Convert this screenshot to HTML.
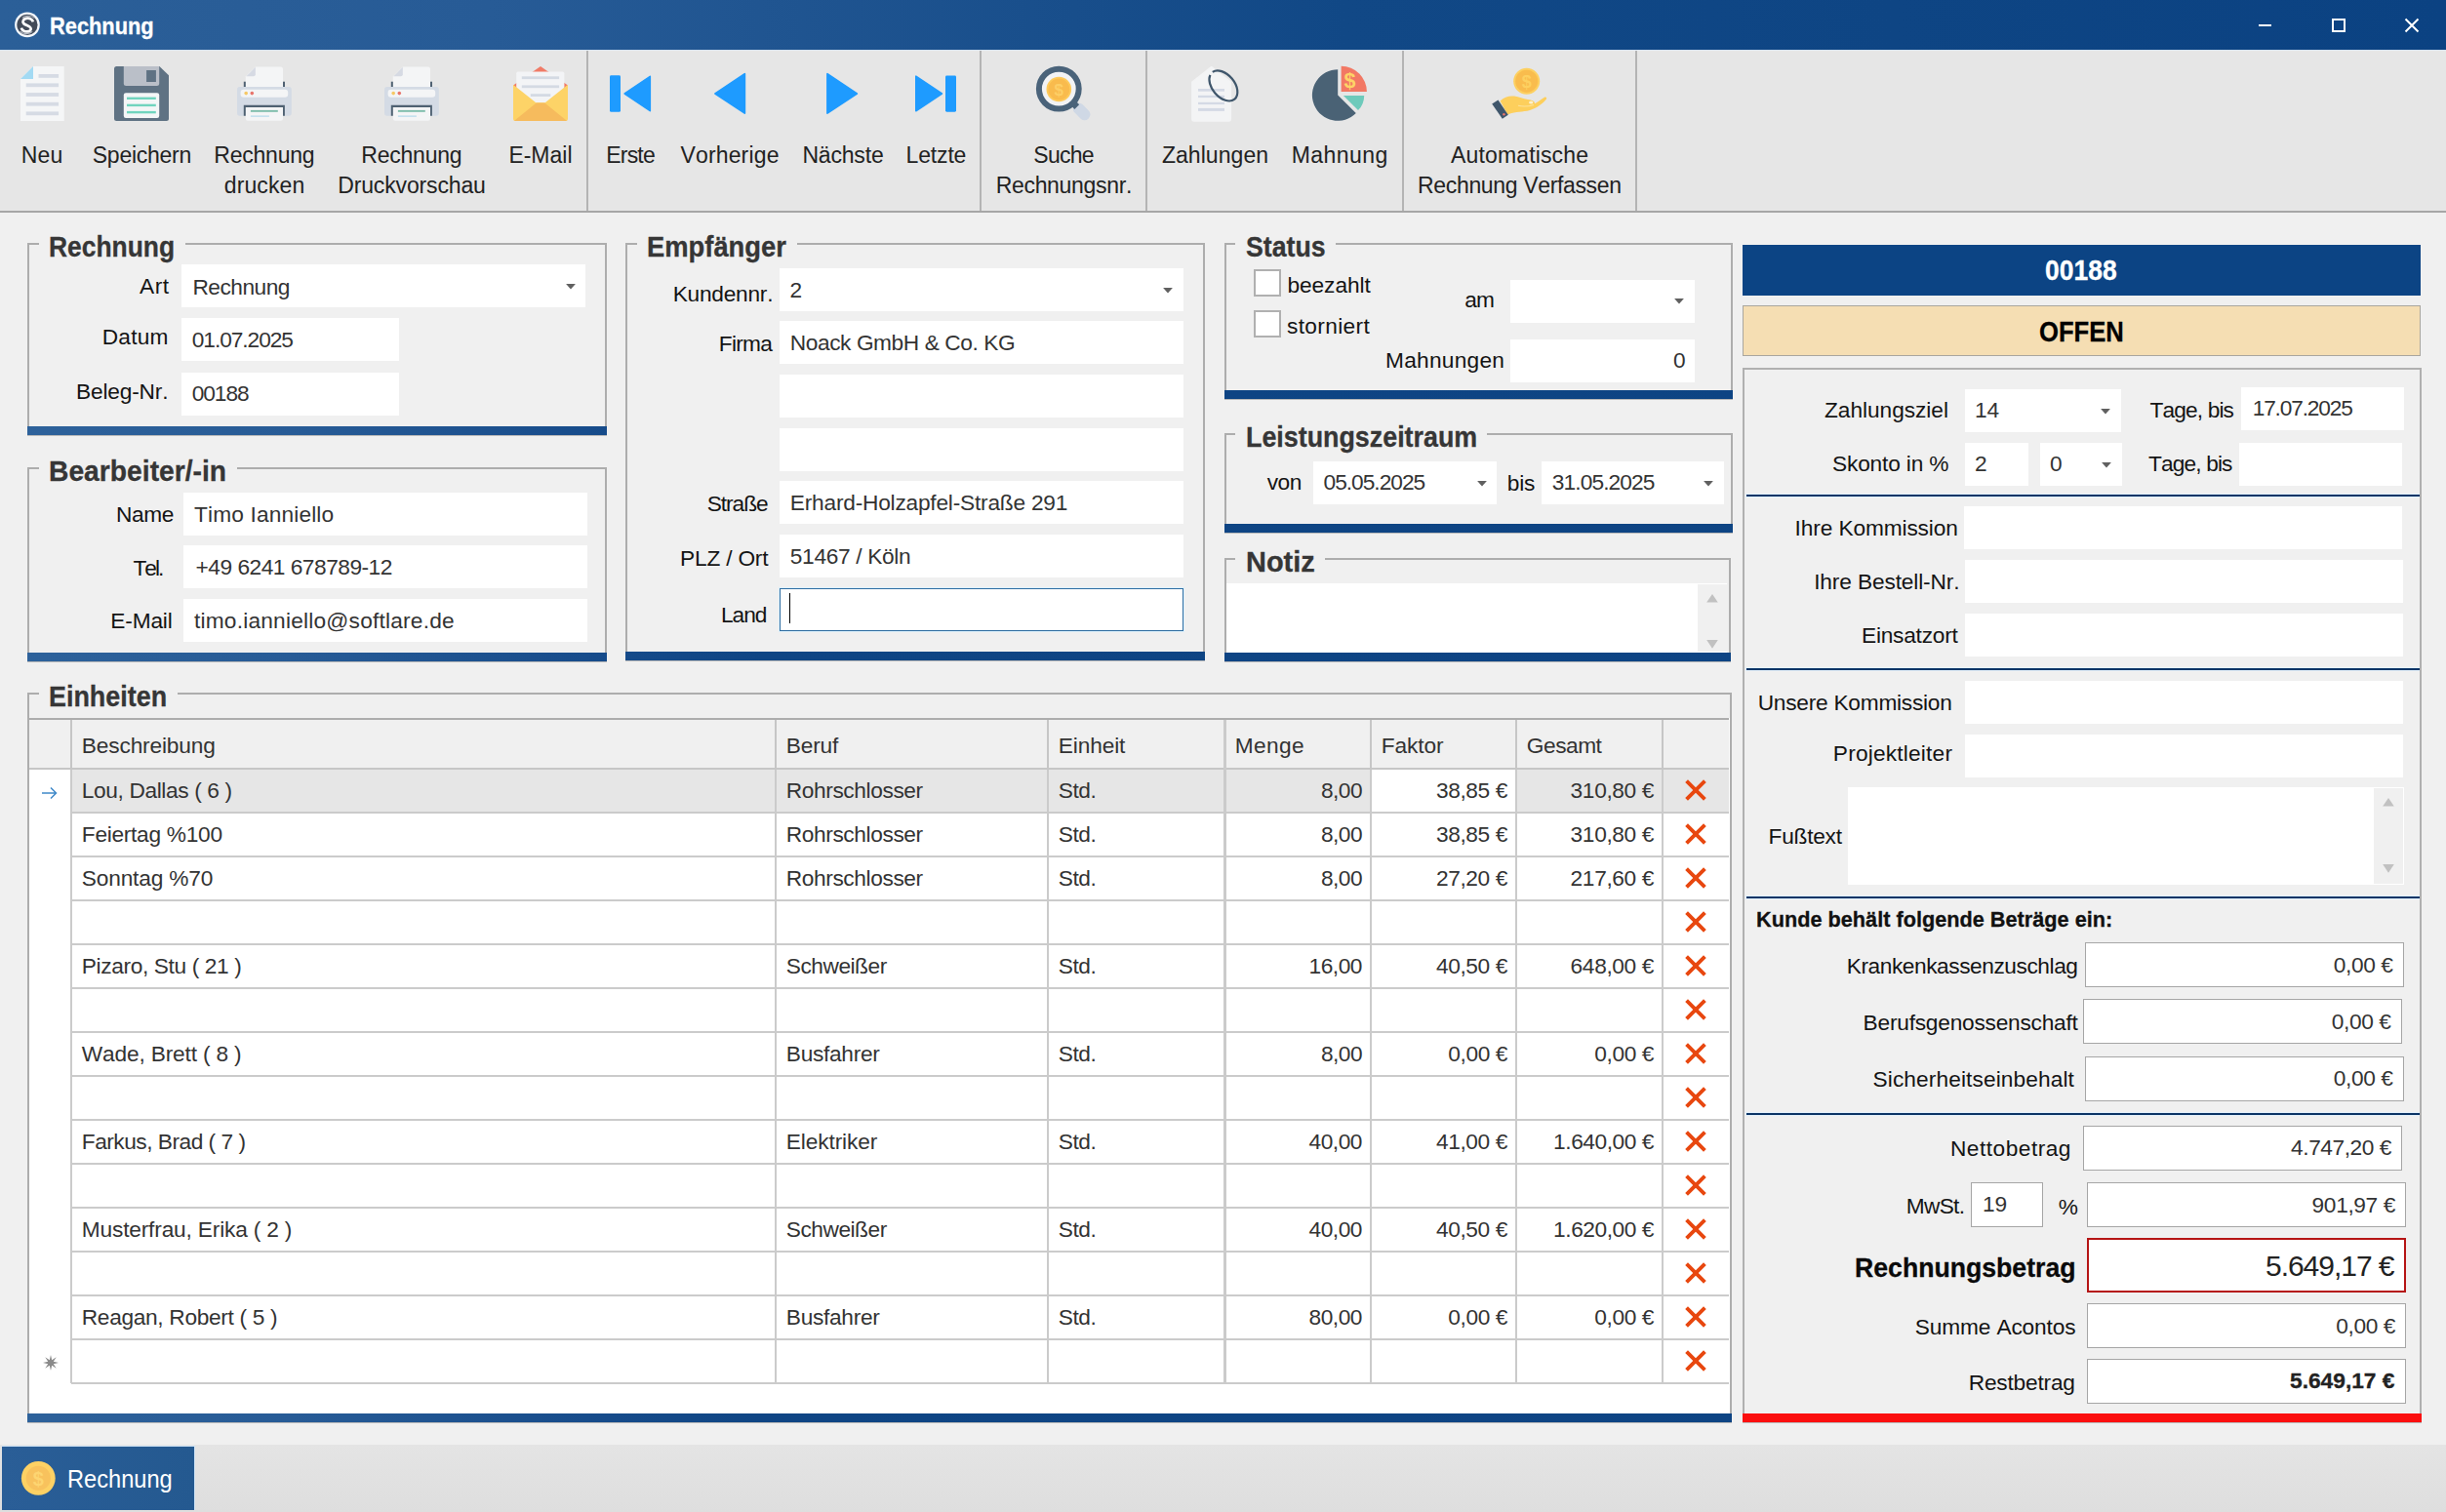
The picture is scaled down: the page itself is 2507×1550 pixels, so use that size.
<!DOCTYPE html>
<html><head><meta charset="utf-8"><title>Rechnung</title>
<style>
html,body{margin:0;padding:0;}
body{width:2507px;height:1550px;overflow:hidden;background:#f0f0f0;position:relative;font-family:"Liberation Sans",sans-serif;color:#141414;}
.a{position:absolute;box-sizing:border-box;}
.t{position:absolute;white-space:nowrap;line-height:1;font-kerning:none;display:block;}
</style></head><body>
<div class="a " style="left:0px;top:0px;width:2507px;height:51px;background:linear-gradient(90deg,#2b5f98 0%,#275b96 20%,#114886 55%,#0b4282 100%);"></div>
<div class="a " style="left:0px;top:51px;width:2507px;height:1px;background:#dbe6f1;"></div>
<span class="t" style="top:14.5px;font-size:24.4px;font-weight:bold;-webkit-text-stroke:0.3px;color:#fff;left:50.9px;transform:scaleX(0.8945);transform-origin:0 0;">Rechnung</span>
<div class="a " style="left:2315px;top:25px;width:13px;height:2px;background:#fff;"></div>
<div class="a " style="left:2390px;top:19px;width:14px;height:14px;border:2px solid #fff;"></div>
<svg class="a" style="left:2464px;top:18px" width="16" height="16" viewBox="0 0 16 16"><path d="M1.5 1.5 L14.5 14.5 M14.5 1.5 L1.5 14.5" stroke="#fff" stroke-width="2" fill="none"/></svg>
<div class="a " style="left:0px;top:52px;width:2507px;height:164px;background:#e6e6e6;"></div>
<div class="a " style="left:0px;top:216px;width:2507px;height:2px;background:#a6a6a6;"></div>
<div class="a " style="left:601px;top:52px;width:2px;height:164px;background:#b4b4b4;"></div>
<div class="a " style="left:1004px;top:52px;width:2px;height:164px;background:#b4b4b4;"></div>
<div class="a " style="left:1174px;top:52px;width:2px;height:164px;background:#b4b4b4;"></div>
<div class="a " style="left:1437px;top:52px;width:2px;height:164px;background:#b4b4b4;"></div>
<div class="a " style="left:1676px;top:52px;width:2px;height:164px;background:#b4b4b4;"></div>
<span class="t" style="top:148.0px;font-size:23px;color:#222;left:21.7px;letter-spacing:0.18px;">Neu</span>
<span class="t" style="top:148.0px;font-size:23px;color:#222;left:94.8px;letter-spacing:-0.27px;">Speichern</span>
<span class="t" style="top:148.0px;font-size:23px;color:#222;left:219.3px;letter-spacing:-0.22px;">Rechnung</span>
<span class="t" style="top:179.1px;font-size:23px;color:#222;left:229.8px;letter-spacing:0.11px;">drucken</span>
<span class="t" style="top:148.0px;font-size:23px;color:#222;left:370.3px;letter-spacing:-0.22px;">Rechnung</span>
<span class="t" style="top:179.1px;font-size:23px;color:#222;left:346.2px;letter-spacing:-0.14px;">Druckvorschau</span>
<span class="t" style="top:148.0px;font-size:23px;color:#222;left:521.4px;letter-spacing:-0.01px;">E-Mail</span>
<span class="t" style="top:148.0px;font-size:23px;color:#222;left:621.2px;letter-spacing:-0.78px;">Erste</span>
<span class="t" style="top:148.0px;font-size:23px;color:#222;left:697.5px;letter-spacing:0.15px;">Vorherige</span>
<span class="t" style="top:148.0px;font-size:23px;color:#222;left:822.4px;letter-spacing:-0.18px;">Nächste</span>
<span class="t" style="top:148.0px;font-size:23px;color:#222;left:928.6px;letter-spacing:-0.17px;">Letzte</span>
<span class="t" style="top:148.0px;font-size:23px;color:#222;left:1059.3px;letter-spacing:-0.73px;">Suche</span>
<span class="t" style="top:179.1px;font-size:23px;color:#222;left:1020.7px;letter-spacing:-0.32px;">Rechnungsnr.</span>
<span class="t" style="top:148.0px;font-size:23px;color:#222;left:1190.9px;letter-spacing:0.06px;">Zahlungen</span>
<span class="t" style="top:148.0px;font-size:23px;color:#222;left:1323.7px;letter-spacing:0.45px;">Mahnung</span>
<span class="t" style="top:148.0px;font-size:23px;color:#222;left:1487.1px;letter-spacing:0.14px;">Automatische</span>
<span class="t" style="top:179.1px;font-size:23px;color:#222;left:1453.1px;letter-spacing:-0.35px;">Rechnung Verfassen</span>
<div class="a " style="left:28px;top:249px;width:594px;height:198px;border:2px solid #adadad;border-bottom:none;"></div>
<div class="a " style="left:28px;top:446px;width:594px;height:1px;background:#b9b9b9;"></div>
<div class="a " style="left:28px;top:437px;width:594px;height:9px;background:linear-gradient(90deg,#2e629b 0px,#275b96 300px,#174c8b 600px,#0f4584 780px,#0c4383 2507px);background-size:2507px 100%;background-position:-28px 0;background-repeat:no-repeat;"></div>
<div class="a " style="left:39.9px;top:247px;width:150.1px;height:6px;background:#f0f0f0;"></div>
<span class="t" style="top:238.9px;font-size:29px;font-weight:bold;-webkit-text-stroke:0.3px;color:#363636;left:50.4px;transform:scaleX(0.9106);transform-origin:0 0;">Rechnung</span>
<div class="a " style="left:186px;top:271px;width:414px;height:44px;background:#fff;"></div>
<svg class="a" style="left:578.5px;top:290.8px" width="12" height="7" viewBox="0 0 12 7"><path d="M1.1 0 H10.9 L6 5.4 Z" fill="#606060"/></svg>
<div class="a " style="left:186px;top:326px;width:223px;height:44px;background:#fff;"></div>
<div class="a " style="left:186px;top:382px;width:223px;height:44px;background:#fff;"></div>
<span class="t" style="top:281.8px;font-size:22.7px;left:143.0px;letter-spacing:0.54px;">Art</span>
<span class="t" style="top:334.1px;font-size:22.7px;left:104.8px;letter-spacing:0.19px;">Datum</span>
<span class="t" style="top:389.6px;font-size:22.7px;left:78.0px;letter-spacing:-0.17px;">Beleg-Nr.</span>
<span class="t" style="top:282.7px;font-size:22.7px;color:#333;left:197.5px;letter-spacing:-0.51px;">Rechnung</span>
<span class="t" style="top:336.7px;font-size:22.7px;color:#333;left:196.8px;letter-spacing:-1.05px;">01.07.2025</span>
<span class="t" style="top:392.4px;font-size:22.7px;color:#333;left:196.8px;letter-spacing:-1.08px;">00188</span>
<div class="a " style="left:28px;top:479px;width:594px;height:200px;border:2px solid #adadad;border-bottom:none;"></div>
<div class="a " style="left:28px;top:678px;width:594px;height:1px;background:#b9b9b9;"></div>
<div class="a " style="left:28px;top:669px;width:594px;height:9px;background:linear-gradient(90deg,#2e629b 0px,#275b96 300px,#174c8b 600px,#0f4584 780px,#0c4383 2507px);background-size:2507px 100%;background-position:-28px 0;background-repeat:no-repeat;"></div>
<div class="a " style="left:39.6px;top:477px;width:203.1px;height:6px;background:#f0f0f0;"></div>
<span class="t" style="top:468.9px;font-size:29px;font-weight:bold;-webkit-text-stroke:0.3px;color:#363636;left:50.1px;transform:scaleX(0.9741);transform-origin:0 0;">Bearbeiter/-in</span>
<div class="a " style="left:188px;top:505px;width:414px;height:44px;background:#fff;"></div>
<div class="a " style="left:188px;top:559px;width:414px;height:44px;background:#fff;"></div>
<div class="a " style="left:188px;top:614px;width:414px;height:44px;background:#fff;"></div>
<span class="t" style="top:515.8px;font-size:22.7px;left:119.0px;letter-spacing:-0.38px;">Name</span>
<span class="t" style="top:570.6px;font-size:22.7px;left:136.5px;letter-spacing:-2.00px;">Tel.</span>
<span class="t" style="top:624.6px;font-size:22.7px;left:113.3px;letter-spacing:-0.16px;">E-Mail</span>
<span class="t" style="top:515.8px;font-size:22.7px;color:#333;left:199.0px;letter-spacing:0.15px;">Timo Ianniello</span>
<span class="t" style="top:569.6px;font-size:22.7px;color:#333;left:200.6px;letter-spacing:-0.49px;">+49 6241 678789-12</span>
<span class="t" style="top:624.6px;font-size:22.7px;color:#333;left:199.0px;letter-spacing:0.21px;">timo.ianniello@softlare.de</span>
<div class="a " style="left:641px;top:249px;width:594px;height:429px;border:2px solid #adadad;border-bottom:none;"></div>
<div class="a " style="left:641px;top:677px;width:594px;height:1px;background:#b9b9b9;"></div>
<div class="a " style="left:641px;top:668px;width:594px;height:9px;background:linear-gradient(90deg,#2e629b 0px,#275b96 300px,#174c8b 600px,#0f4584 780px,#0c4383 2507px);background-size:2507px 100%;background-position:-641px 0;background-repeat:no-repeat;"></div>
<div class="a " style="left:652.8px;top:247px;width:163.9000000000001px;height:6px;background:#f0f0f0;"></div>
<span class="t" style="top:238.9px;font-size:29px;font-weight:bold;-webkit-text-stroke:0.3px;color:#363636;left:663.3px;transform:scaleX(0.9434);transform-origin:0 0;">Empfänger</span>
<div class="a " style="left:799px;top:275px;width:414px;height:44px;background:#fff;"></div>
<div class="a " style="left:799px;top:329px;width:414px;height:44px;background:#fff;"></div>
<div class="a " style="left:799px;top:384px;width:414px;height:44px;background:#fff;"></div>
<div class="a " style="left:799px;top:439px;width:414px;height:44px;background:#fff;"></div>
<div class="a " style="left:799px;top:493px;width:414px;height:44px;background:#fff;"></div>
<div class="a " style="left:799px;top:548px;width:414px;height:44px;background:#fff;"></div>
<div class="a " style="left:799px;top:603px;width:414px;height:44px;background:#fff;border:1px solid #2f6da1;box-shadow:0 0 0 1px #dcf0fb;"></div>
<svg class="a" style="left:1191px;top:294.8px" width="12" height="7" viewBox="0 0 12 7"><path d="M1.1 0 H10.9 L6 5.4 Z" fill="#606060"/></svg>
<span class="t" style="top:289.7px;font-size:22.7px;left:689.7px;letter-spacing:-0.24px;">Kundennr.</span>
<span class="t" style="top:340.5px;font-size:22.7px;left:736.8px;letter-spacing:-0.71px;">Firma</span>
<span class="t" style="top:504.8px;font-size:22.7px;left:724.8px;letter-spacing:-1.06px;">Straße</span>
<span class="t" style="top:560.5px;font-size:22.7px;left:697.1px;letter-spacing:-0.20px;">PLZ / Ort</span>
<span class="t" style="top:619.4px;font-size:22.7px;left:739.0px;letter-spacing:-1.00px;">Land</span>
<span class="t" style="top:285.8px;font-size:22.7px;color:#333;left:809.5px;letter-spacing:-0.24px;">2</span>
<span class="t" style="top:339.8px;font-size:22.7px;color:#333;left:809.8px;letter-spacing:-0.42px;">Noack GmbH &amp; Co. KG</span>
<span class="t" style="top:503.8px;font-size:22.7px;color:#333;left:809.8px;letter-spacing:-0.21px;">Erhard-Holzapfel-Straße 291</span>
<span class="t" style="top:558.8px;font-size:22.7px;color:#333;left:809.8px;letter-spacing:-0.32px;">51467 / Köln</span>
<div class="a " style="left:809px;top:608px;width:1px;height:31px;background:#000;"></div>
<div class="a " style="left:1255px;top:249px;width:521px;height:161px;border:2px solid #adadad;border-bottom:none;"></div>
<div class="a " style="left:1255px;top:409px;width:521px;height:1px;background:#b9b9b9;"></div>
<div class="a " style="left:1255px;top:400px;width:521px;height:9px;background:linear-gradient(90deg,#2e629b 0px,#275b96 300px,#174c8b 600px,#0f4584 780px,#0c4383 2507px);background-size:2507px 100%;background-position:-1255px 0;background-repeat:no-repeat;"></div>
<div class="a " style="left:1266.0px;top:247px;width:102.5px;height:6px;background:#f0f0f0;"></div>
<span class="t" style="top:238.9px;font-size:29px;font-weight:bold;-webkit-text-stroke:0.3px;color:#363636;left:1276.5px;transform:scaleX(0.9196);transform-origin:0 0;">Status</span>
<div class="a " style="left:1285px;top:276px;width:28px;height:28px;background:#fff;border:2px solid #b0b0b0;"></div>
<div class="a " style="left:1285px;top:318px;width:28px;height:28px;background:#fff;border:2px solid #b0b0b0;"></div>
<span class="t" style="top:280.8px;font-size:22.7px;left:1319.5px;letter-spacing:-0.08px;">beezahlt</span>
<span class="t" style="top:322.6px;font-size:22.7px;left:1319.0px;letter-spacing:0.35px;">storniert</span>
<span class="t" style="top:296.0px;font-size:22.7px;left:1501.3px;letter-spacing:-0.83px;">am</span>
<div class="a " style="left:1548px;top:287px;width:189px;height:44px;background:#fff;"></div>
<svg class="a" style="left:1715px;top:306.3px" width="12" height="7" viewBox="0 0 12 7"><path d="M1.1 0 H10.9 L6 5.4 Z" fill="#606060"/></svg>
<div class="a " style="left:1548px;top:348px;width:189px;height:44px;background:#fff;"></div>
<span class="t" style="top:357.8px;font-size:22.7px;left:1420.0px;letter-spacing:0.26px;">Mahnungen</span>
<span class="t" style="top:357.8px;font-size:22.7px;color:#333;left:1714.9px;letter-spacing:-0.24px;">0</span>
<div class="a " style="left:1255px;top:444px;width:521px;height:103px;border:2px solid #adadad;border-bottom:none;"></div>
<div class="a " style="left:1255px;top:546px;width:521px;height:1px;background:#b9b9b9;"></div>
<div class="a " style="left:1255px;top:537px;width:521px;height:9px;background:linear-gradient(90deg,#2e629b 0px,#275b96 300px,#174c8b 600px,#0f4584 780px,#0c4383 2507px);background-size:2507px 100%;background-position:-1255px 0;background-repeat:no-repeat;"></div>
<div class="a " style="left:1266.0px;top:442px;width:258.20000000000005px;height:6px;background:#f0f0f0;"></div>
<span class="t" style="top:433.9px;font-size:29px;font-weight:bold;-webkit-text-stroke:0.3px;color:#363636;left:1276.5px;transform:scaleX(0.9258);transform-origin:0 0;">Leistungszeitraum</span>
<span class="t" style="top:482.8px;font-size:22.7px;left:1298.7px;letter-spacing:-0.50px;">von</span>
<div class="a " style="left:1346px;top:473px;width:188px;height:44px;background:#fff;"></div>
<svg class="a" style="left:1512.5px;top:492.8px" width="12" height="7" viewBox="0 0 12 7"><path d="M1.1 0 H10.9 L6 5.4 Z" fill="#606060"/></svg>
<span class="t" style="top:483.8px;font-size:22.7px;left:1544.8px;letter-spacing:-0.26px;">bis</span>
<div class="a " style="left:1580px;top:473px;width:187px;height:44px;background:#fff;"></div>
<svg class="a" style="left:1745px;top:492.8px" width="12" height="7" viewBox="0 0 12 7"><path d="M1.1 0 H10.9 L6 5.4 Z" fill="#606060"/></svg>
<span class="t" style="top:483.3px;font-size:22.7px;color:#333;left:1356.5px;letter-spacing:-0.98px;">05.05.2025</span>
<span class="t" style="top:483.3px;font-size:22.7px;color:#333;left:1590.8px;letter-spacing:-0.88px;">31.05.2025</span>
<div class="a " style="left:1255px;top:572px;width:519px;height:107px;border:2px solid #adadad;border-bottom:none;"></div>
<div class="a " style="left:1255px;top:678px;width:519px;height:1px;background:#b9b9b9;"></div>
<div class="a " style="left:1255px;top:669px;width:519px;height:9px;background:linear-gradient(90deg,#2e629b 0px,#275b96 300px,#174c8b 600px,#0f4584 780px,#0c4383 2507px);background-size:2507px 100%;background-position:-1255px 0;background-repeat:no-repeat;"></div>
<div class="a " style="left:1266.0px;top:570px;width:91.79999999999995px;height:6px;background:#f0f0f0;"></div>
<span class="t" style="top:561.9px;font-size:29px;font-weight:bold;-webkit-text-stroke:0.3px;color:#363636;left:1276.5px;transform:scaleX(0.9990);transform-origin:0 0;">Notiz</span>
<div class="a " style="left:1257px;top:598px;width:513px;height:71px;background:#fff;"></div>
<div class="a " style="left:1740px;top:599px;width:30px;height:69px;background:#f0f0f0;"></div>
<svg class="a" style="left:1748.5px;top:609.4px" width="12" height="9" viewBox="0 0 12 9"><path d="M6 0 L11.8 8.6 H0.2 Z" fill="#c1c1c1"/></svg>
<svg class="a" style="left:1748.5px;top:656.2px" width="12" height="9" viewBox="0 0 12 9"><path d="M0.2 0 H11.8 L6 8.8 Z" fill="#c1c1c1"/></svg>
<div class="a " style="left:1786px;top:251px;width:695px;height:52px;background:#0c4484;"></div>
<span class="t" style="top:263.4px;font-size:28.8px;font-weight:bold;-webkit-text-stroke:0.3px;color:#fff;left:2096.4px;transform:scaleX(0.9191);transform-origin:0 0;">00188</span>
<div class="a " style="left:1786px;top:313px;width:695px;height:52px;background:#f5deb3;border:1px solid #a9a69f;"></div>
<span class="t" style="top:325.6px;font-size:28.8px;font-weight:bold;-webkit-text-stroke:0.3px;color:#000;left:2089.5px;transform:scaleX(0.8894);transform-origin:0 0;">OFFEN</span>
<div class="a " style="left:1786px;top:377px;width:696px;height:1073px;border:2px solid #b0b0b0;border-bottom:none;"></div>
<div class="a " style="left:1789px;top:506px;width:691px;height:4px;background:#e4f1fb;"></div>
<div class="a " style="left:1790px;top:507px;width:690px;height:2px;background:#0c3566;"></div>
<div class="a " style="left:1789px;top:684px;width:691px;height:4px;background:#e4f1fb;"></div>
<div class="a " style="left:1790px;top:685px;width:690px;height:2px;background:#0c3566;"></div>
<div class="a " style="left:1789px;top:918px;width:691px;height:4px;background:#e4f1fb;"></div>
<div class="a " style="left:1790px;top:919px;width:690px;height:2px;background:#0c3566;"></div>
<div class="a " style="left:1789px;top:1140px;width:691px;height:4px;background:#e4f1fb;"></div>
<div class="a " style="left:1790px;top:1141px;width:690px;height:2px;background:#0c3566;"></div>
<span class="t" style="top:409.3px;font-size:22.7px;left:1870.0px;letter-spacing:-0.04px;">Zahlungsziel</span>
<div class="a " style="left:2014px;top:399px;width:160px;height:44px;background:#fff;"></div>
<svg class="a" style="left:2152px;top:419.1px" width="12" height="7" viewBox="0 0 12 7"><path d="M1.1 0 H10.9 L6 5.4 Z" fill="#606060"/></svg>
<span class="t" style="top:409.1px;font-size:22.7px;color:#333;left:2024.0px;letter-spacing:-0.24px;">14</span>
<span class="t" style="top:409.1px;font-size:22.7px;left:2203.6px;letter-spacing:-0.87px;">Tage, bis</span>
<div class="a " style="left:2297px;top:397px;width:167px;height:44px;background:#fff;"></div>
<span class="t" style="top:407.3px;font-size:22.7px;color:#333;left:2308.7px;letter-spacing:-1.16px;">17.07.2025</span>
<span class="t" style="top:464.3px;font-size:22.7px;left:1878.0px;letter-spacing:-0.16px;">Skonto in %</span>
<div class="a " style="left:2014px;top:454px;width:65px;height:44px;background:#fff;"></div>
<span class="t" style="top:464.1px;font-size:22.7px;color:#333;left:2024.0px;letter-spacing:-0.24px;">2</span>
<div class="a " style="left:2091px;top:454px;width:84px;height:44px;background:#fff;"></div>
<svg class="a" style="left:2153px;top:473.8px" width="12" height="7" viewBox="0 0 12 7"><path d="M1.1 0 H10.9 L6 5.4 Z" fill="#606060"/></svg>
<span class="t" style="top:464.1px;font-size:22.7px;color:#333;left:2101.0px;letter-spacing:-0.24px;">0</span>
<span class="t" style="top:464.1px;font-size:22.7px;left:2202.0px;letter-spacing:-0.86px;">Tage, bis</span>
<div class="a " style="left:2295px;top:454px;width:167px;height:44px;background:#fff;"></div>
<span class="t" style="top:530.4px;font-size:22.7px;left:1839.6px;letter-spacing:-0.12px;">Ihre Kommission</span>
<div class="a " style="left:2013px;top:519px;width:449px;height:44px;background:#fff;"></div>
<span class="t" style="top:584.8px;font-size:22.7px;left:1859.2px;letter-spacing:-0.13px;">Ihre Bestell-Nr.</span>
<div class="a " style="left:2014px;top:574px;width:449px;height:44px;background:#fff;"></div>
<span class="t" style="top:639.8px;font-size:22.7px;left:1908.0px;letter-spacing:-0.23px;">Einsatzort</span>
<div class="a " style="left:2014px;top:629px;width:449px;height:44px;background:#fff;"></div>
<span class="t" style="top:709.0px;font-size:22.7px;left:1801.7px;letter-spacing:-0.24px;">Unsere Kommission</span>
<div class="a " style="left:2014px;top:698px;width:449px;height:44px;background:#fff;"></div>
<span class="t" style="top:760.8px;font-size:22.7px;left:1878.8px;letter-spacing:0.20px;">Projektleiter</span>
<div class="a " style="left:2014px;top:753px;width:449px;height:44px;background:#fff;"></div>
<span class="t" style="top:845.8px;font-size:22.7px;left:1812.6px;letter-spacing:-0.26px;">Fußtext</span>
<div class="a " style="left:1894px;top:807px;width:570px;height:100px;background:#fff;"></div>
<div class="a " style="left:2433px;top:808px;width:30px;height:98px;background:#f0f0f0;"></div>
<svg class="a" style="left:2441.5px;top:818.4px" width="12" height="9" viewBox="0 0 12 9"><path d="M6 0 L11.8 8.6 H0.2 Z" fill="#c1c1c1"/></svg>
<svg class="a" style="left:2441.5px;top:886.2px" width="12" height="9" viewBox="0 0 12 9"><path d="M0.2 0 H11.8 L6 8.8 Z" fill="#c1c1c1"/></svg>
<span class="t" style="top:931.5px;font-size:22.3px;font-weight:bold;-webkit-text-stroke:0.3px;color:#111;left:1799.5px;transform:scaleX(0.9730);transform-origin:0 0;">Kunde behält folgende Beträge ein:</span>
<span class="t" style="top:978.5px;font-size:22.7px;left:1892.8px;letter-spacing:-0.44px;">Krankenkassenzuschlag</span>
<div class="a " style="left:2137px;top:966px;width:327px;height:46px;background:#fff;border:1px solid #a6a6a6;"></div>
<span class="t" style="top:977.8px;font-size:22.7px;color:#333;left:2391.8px;letter-spacing:-0.38px;">0,00 €</span>
<span class="t" style="top:1036.8px;font-size:22.7px;left:1909.6px;letter-spacing:-0.22px;">Berufsgenossenschaft</span>
<div class="a " style="left:2135px;top:1024px;width:327px;height:46px;background:#fff;border:1px solid #a6a6a6;"></div>
<span class="t" style="top:1035.8px;font-size:22.7px;color:#333;left:2389.8px;letter-spacing:-0.38px;">0,00 €</span>
<span class="t" style="top:1094.8px;font-size:22.7px;left:1919.5px;letter-spacing:0.11px;">Sicherheitseinbehalt</span>
<div class="a " style="left:2137px;top:1083px;width:327px;height:46px;background:#fff;border:1px solid #a6a6a6;"></div>
<span class="t" style="top:1094.3px;font-size:22.7px;color:#333;left:2391.8px;letter-spacing:-0.38px;">0,00 €</span>
<span class="t" style="top:1166.2px;font-size:22.7px;left:1999.0px;letter-spacing:0.49px;">Nettobetrag</span>
<div class="a " style="left:2135px;top:1154px;width:327px;height:46px;background:#fff;border:1px solid #a6a6a6;"></div>
<span class="t" style="top:1165.3px;font-size:22.7px;color:#333;left:2348.1px;letter-spacing:-0.44px;">4.747,20 €</span>
<span class="t" style="top:1225.2px;font-size:22.7px;left:1953.8px;letter-spacing:-0.72px;">MwSt.</span>
<div class="a " style="left:2020px;top:1212px;width:74px;height:46px;background:#fff;border:1px solid #a6a6a6;"></div>
<span class="t" style="top:1223.3px;font-size:22.7px;color:#333;left:2032.0px;letter-spacing:-0.24px;">19</span>
<span class="t" style="top:1225.5px;font-size:22.7px;left:2109.7px;letter-spacing:-2.00px;">%</span>
<div class="a " style="left:2139px;top:1212px;width:327px;height:46px;background:#fff;border:1px solid #a6a6a6;"></div>
<span class="t" style="top:1223.8px;font-size:22.7px;color:#333;left:2369.6px;letter-spacing:-0.35px;">901,97 €</span>
<span class="t" style="top:1285.0px;font-size:28.4px;font-weight:bold;-webkit-text-stroke:0.3px;color:#0a0a0a;left:1901.0px;transform:scaleX(0.9386);transform-origin:0 0;">Rechnungsbetrag</span>
<div class="a " style="left:2139px;top:1269px;width:327px;height:56px;background:#fff;border:2px solid #b51515;"></div>
<span class="t" style="top:1282.9px;font-size:30px;color:#222;left:2322.0px;letter-spacing:-1.03px;">5.649,17 €</span>
<span class="t" style="top:1349.2px;font-size:22.7px;left:1962.8px;letter-spacing:-0.14px;">Summe Acontos</span>
<div class="a " style="left:2139px;top:1336px;width:327px;height:46px;background:#fff;border:1px solid #a6a6a6;"></div>
<span class="t" style="top:1348.3px;font-size:22.7px;color:#333;left:2394.3px;letter-spacing:-0.38px;">0,00 €</span>
<span class="t" style="top:1405.8px;font-size:22.7px;left:2017.7px;letter-spacing:-0.19px;">Restbetrag</span>
<div class="a " style="left:2139px;top:1393px;width:327px;height:46px;background:#fff;border:1px solid #a6a6a6;"></div>
<span class="t" style="top:1405.1px;font-size:22.3px;font-weight:bold;-webkit-text-stroke:0.3px;color:#222;left:2347.0px;transform:scaleX(1.0199);transform-origin:0 0;">5.649,17 €</span>
<div class="a " style="left:1786px;top:1449px;width:696px;height:9px;background:#fb0f0f;"></div>
<div class="a " style="left:1786px;top:1458px;width:696px;height:1px;background:#b9b9b9;"></div>
<div class="a " style="left:28px;top:710px;width:1747px;height:749px;border:2px solid #adadad;border-bottom:none;"></div>
<div class="a " style="left:28px;top:1458px;width:1747px;height:1px;background:#b9b9b9;"></div>
<div class="a " style="left:28px;top:1449px;width:1747px;height:9px;background:linear-gradient(90deg,#2e629b 0px,#275b96 300px,#174c8b 600px,#0f4584 780px,#0c4383 2507px);background-size:2507px 100%;background-position:-28px 0;background-repeat:no-repeat;"></div>
<div class="a " style="left:39.9px;top:708px;width:142.1px;height:6px;background:#f0f0f0;"></div>
<span class="t" style="top:699.9px;font-size:29px;font-weight:bold;-webkit-text-stroke:0.3px;color:#363636;left:50.4px;transform:scaleX(0.9278);transform-origin:0 0;">Einheiten</span>
<div class="a " style="left:30px;top:736px;width:1743px;height:713px;background:#fff;"></div>
<div class="a " style="left:30px;top:736px;width:1742px;height:2px;background:#adadad;"></div>
<div class="a " style="left:30px;top:738px;width:1742px;height:49px;background:#f0f0f0;"></div>
<div class="a " style="left:74px;top:789px;width:1698px;height:43px;background:#e6e6e6;"></div>
<div class="a " style="left:1406px;top:789px;width:147px;height:43px;background:#fff;"></div>
<div class="a " style="left:30px;top:787px;width:1742px;height:2px;background:#c6c6c6;"></div>
<div class="a " style="left:73px;top:832px;width:1699px;height:2px;background:#cbcbcb;"></div>
<div class="a " style="left:73px;top:877px;width:1699px;height:2px;background:#cbcbcb;"></div>
<div class="a " style="left:73px;top:922px;width:1699px;height:2px;background:#cbcbcb;"></div>
<div class="a " style="left:73px;top:967px;width:1699px;height:2px;background:#cbcbcb;"></div>
<div class="a " style="left:73px;top:1012px;width:1699px;height:2px;background:#cbcbcb;"></div>
<div class="a " style="left:73px;top:1057px;width:1699px;height:2px;background:#cbcbcb;"></div>
<div class="a " style="left:73px;top:1102px;width:1699px;height:2px;background:#cbcbcb;"></div>
<div class="a " style="left:73px;top:1147px;width:1699px;height:2px;background:#cbcbcb;"></div>
<div class="a " style="left:73px;top:1192px;width:1699px;height:2px;background:#cbcbcb;"></div>
<div class="a " style="left:73px;top:1237px;width:1699px;height:2px;background:#cbcbcb;"></div>
<div class="a " style="left:73px;top:1282px;width:1699px;height:2px;background:#cbcbcb;"></div>
<div class="a " style="left:73px;top:1327px;width:1699px;height:2px;background:#cbcbcb;"></div>
<div class="a " style="left:73px;top:1372px;width:1699px;height:2px;background:#cbcbcb;"></div>
<div class="a " style="left:73px;top:1417px;width:1699px;height:2px;background:#cbcbcb;"></div>
<div class="a " style="left:72px;top:738px;width:2px;height:49px;background:#c6c6c6;"></div>
<div class="a " style="left:72px;top:789px;width:2px;height:629px;background:#cbcbcb;"></div>
<div class="a " style="left:794px;top:738px;width:2px;height:49px;background:#c6c6c6;"></div>
<div class="a " style="left:794px;top:789px;width:2px;height:629px;background:#cbcbcb;"></div>
<div class="a " style="left:1073px;top:738px;width:2px;height:49px;background:#c6c6c6;"></div>
<div class="a " style="left:1073px;top:789px;width:2px;height:629px;background:#cbcbcb;"></div>
<div class="a " style="left:1254px;top:738px;width:2px;height:49px;background:#c6c6c6;"></div>
<div class="a " style="left:1254px;top:789px;width:2px;height:629px;background:#cbcbcb;"></div>
<div class="a " style="left:1404px;top:738px;width:2px;height:49px;background:#c6c6c6;"></div>
<div class="a " style="left:1404px;top:789px;width:2px;height:629px;background:#cbcbcb;"></div>
<div class="a " style="left:1553px;top:738px;width:2px;height:49px;background:#c6c6c6;"></div>
<div class="a " style="left:1553px;top:789px;width:2px;height:629px;background:#cbcbcb;"></div>
<div class="a " style="left:1703px;top:738px;width:2px;height:49px;background:#c6c6c6;"></div>
<div class="a " style="left:1703px;top:789px;width:2px;height:629px;background:#cbcbcb;"></div>
<div class="a " style="left:1254px;top:738px;width:3px;height:680px;background:#cbcbcb;"></div>
<span class="t" style="top:752.5px;font-size:22.7px;color:#333;left:83.8px;letter-spacing:-0.15px;">Beschreibung</span>
<span class="t" style="top:752.5px;font-size:22.7px;color:#333;left:805.8px;letter-spacing:-0.18px;">Beruf</span>
<span class="t" style="top:752.5px;font-size:22.7px;color:#333;left:1084.8px;letter-spacing:-0.13px;">Einheit</span>
<span class="t" style="top:752.5px;font-size:22.7px;color:#333;left:1265.8px;letter-spacing:0.35px;">Menge</span>
<span class="t" style="top:752.5px;font-size:22.7px;color:#333;left:1415.8px;letter-spacing:-0.13px;">Faktor</span>
<span class="t" style="top:752.5px;font-size:22.7px;color:#333;left:1564.8px;letter-spacing:-0.46px;">Gesamt</span>
<span class="t" style="top:798.7px;font-size:22.7px;color:#333;left:83.8px;letter-spacing:-0.37px;">Lou, Dallas ( 6 )</span>
<span class="t" style="top:798.7px;font-size:22.7px;color:#333;left:805.8px;letter-spacing:-0.39px;">Rohrschlosser</span>
<span class="t" style="top:798.7px;font-size:22.7px;color:#333;left:1084.8px;letter-spacing:-0.48px;">Std.</span>
<span class="t" style="top:798.7px;font-size:22.7px;color:#333;left:1353.9px;letter-spacing:-0.51px;">8,00</span>
<span class="t" style="top:798.7px;font-size:22.7px;color:#333;left:1471.9px;letter-spacing:-0.36px;">38,85 €</span>
<span class="t" style="top:798.7px;font-size:22.7px;color:#333;left:1609.6px;letter-spacing:-0.35px;">310,80 €</span>
<svg class="a" style="left:1727.4px;top:799.2px" width="22" height="22" viewBox="0 0 22 22"><path d="M1.6 1.6 L20.4 20.4 M20.4 1.6 L1.6 20.4" stroke="#e8470f" stroke-width="3.9" fill="none"/></svg>
<span class="t" style="top:843.7px;font-size:22.7px;color:#333;left:83.8px;letter-spacing:-0.28px;">Feiertag %100</span>
<span class="t" style="top:843.7px;font-size:22.7px;color:#333;left:805.8px;letter-spacing:-0.39px;">Rohrschlosser</span>
<span class="t" style="top:843.7px;font-size:22.7px;color:#333;left:1084.8px;letter-spacing:-0.48px;">Std.</span>
<span class="t" style="top:843.7px;font-size:22.7px;color:#333;left:1353.9px;letter-spacing:-0.51px;">8,00</span>
<span class="t" style="top:843.7px;font-size:22.7px;color:#333;left:1471.9px;letter-spacing:-0.36px;">38,85 €</span>
<span class="t" style="top:843.7px;font-size:22.7px;color:#333;left:1609.6px;letter-spacing:-0.35px;">310,80 €</span>
<svg class="a" style="left:1727.4px;top:844.2px" width="22" height="22" viewBox="0 0 22 22"><path d="M1.6 1.6 L20.4 20.4 M20.4 1.6 L1.6 20.4" stroke="#e8470f" stroke-width="3.9" fill="none"/></svg>
<span class="t" style="top:888.7px;font-size:22.7px;color:#333;left:83.8px;letter-spacing:-0.17px;">Sonntag %70</span>
<span class="t" style="top:888.7px;font-size:22.7px;color:#333;left:805.8px;letter-spacing:-0.39px;">Rohrschlosser</span>
<span class="t" style="top:888.7px;font-size:22.7px;color:#333;left:1084.8px;letter-spacing:-0.48px;">Std.</span>
<span class="t" style="top:888.7px;font-size:22.7px;color:#333;left:1353.9px;letter-spacing:-0.51px;">8,00</span>
<span class="t" style="top:888.7px;font-size:22.7px;color:#333;left:1471.9px;letter-spacing:-0.36px;">27,20 €</span>
<span class="t" style="top:888.7px;font-size:22.7px;color:#333;left:1609.6px;letter-spacing:-0.35px;">217,60 €</span>
<svg class="a" style="left:1727.4px;top:889.2px" width="22" height="22" viewBox="0 0 22 22"><path d="M1.6 1.6 L20.4 20.4 M20.4 1.6 L1.6 20.4" stroke="#e8470f" stroke-width="3.9" fill="none"/></svg>
<svg class="a" style="left:1727.4px;top:934.2px" width="22" height="22" viewBox="0 0 22 22"><path d="M1.6 1.6 L20.4 20.4 M20.4 1.6 L1.6 20.4" stroke="#e8470f" stroke-width="3.9" fill="none"/></svg>
<span class="t" style="top:978.7px;font-size:22.7px;color:#333;left:83.8px;letter-spacing:-0.37px;">Pizaro, Stu ( 21 )</span>
<span class="t" style="top:978.7px;font-size:22.7px;color:#333;left:805.8px;letter-spacing:-0.47px;">Schweißer</span>
<span class="t" style="top:978.7px;font-size:22.7px;color:#333;left:1084.8px;letter-spacing:-0.48px;">Std.</span>
<span class="t" style="top:978.7px;font-size:22.7px;color:#333;left:1341.5px;letter-spacing:-0.46px;">16,00</span>
<span class="t" style="top:978.7px;font-size:22.7px;color:#333;left:1471.9px;letter-spacing:-0.36px;">40,50 €</span>
<span class="t" style="top:978.7px;font-size:22.7px;color:#333;left:1609.6px;letter-spacing:-0.35px;">648,00 €</span>
<svg class="a" style="left:1727.4px;top:979.2px" width="22" height="22" viewBox="0 0 22 22"><path d="M1.6 1.6 L20.4 20.4 M20.4 1.6 L1.6 20.4" stroke="#e8470f" stroke-width="3.9" fill="none"/></svg>
<svg class="a" style="left:1727.4px;top:1024.2px" width="22" height="22" viewBox="0 0 22 22"><path d="M1.6 1.6 L20.4 20.4 M20.4 1.6 L1.6 20.4" stroke="#e8470f" stroke-width="3.9" fill="none"/></svg>
<span class="t" style="top:1068.7px;font-size:22.7px;color:#333;left:83.8px;letter-spacing:-0.16px;">Wade, Brett ( 8 )</span>
<span class="t" style="top:1068.7px;font-size:22.7px;color:#333;left:805.8px;letter-spacing:-0.30px;">Busfahrer</span>
<span class="t" style="top:1068.7px;font-size:22.7px;color:#333;left:1084.8px;letter-spacing:-0.48px;">Std.</span>
<span class="t" style="top:1068.7px;font-size:22.7px;color:#333;left:1353.9px;letter-spacing:-0.51px;">8,00</span>
<span class="t" style="top:1068.7px;font-size:22.7px;color:#333;left:1484.3px;letter-spacing:-0.38px;">0,00 €</span>
<span class="t" style="top:1068.7px;font-size:22.7px;color:#333;left:1634.3px;letter-spacing:-0.38px;">0,00 €</span>
<svg class="a" style="left:1727.4px;top:1069.2px" width="22" height="22" viewBox="0 0 22 22"><path d="M1.6 1.6 L20.4 20.4 M20.4 1.6 L1.6 20.4" stroke="#e8470f" stroke-width="3.9" fill="none"/></svg>
<svg class="a" style="left:1727.4px;top:1114.2px" width="22" height="22" viewBox="0 0 22 22"><path d="M1.6 1.6 L20.4 20.4 M20.4 1.6 L1.6 20.4" stroke="#e8470f" stroke-width="3.9" fill="none"/></svg>
<span class="t" style="top:1158.7px;font-size:22.7px;color:#333;left:83.8px;letter-spacing:-0.49px;">Farkus, Brad ( 7 )</span>
<span class="t" style="top:1158.7px;font-size:22.7px;color:#333;left:805.8px;letter-spacing:-0.12px;">Elektriker</span>
<span class="t" style="top:1158.7px;font-size:22.7px;color:#333;left:1084.8px;letter-spacing:-0.48px;">Std.</span>
<span class="t" style="top:1158.7px;font-size:22.7px;color:#333;left:1341.5px;letter-spacing:-0.46px;">40,00</span>
<span class="t" style="top:1158.7px;font-size:22.7px;color:#333;left:1471.9px;letter-spacing:-0.36px;">41,00 €</span>
<span class="t" style="top:1158.7px;font-size:22.7px;color:#333;left:1592.1px;letter-spacing:-0.44px;">1.640,00 €</span>
<svg class="a" style="left:1727.4px;top:1159.2px" width="22" height="22" viewBox="0 0 22 22"><path d="M1.6 1.6 L20.4 20.4 M20.4 1.6 L1.6 20.4" stroke="#e8470f" stroke-width="3.9" fill="none"/></svg>
<svg class="a" style="left:1727.4px;top:1204.2px" width="22" height="22" viewBox="0 0 22 22"><path d="M1.6 1.6 L20.4 20.4 M20.4 1.6 L1.6 20.4" stroke="#e8470f" stroke-width="3.9" fill="none"/></svg>
<span class="t" style="top:1248.7px;font-size:22.7px;color:#333;left:83.8px;letter-spacing:-0.17px;">Musterfrau, Erika ( 2 )</span>
<span class="t" style="top:1248.7px;font-size:22.7px;color:#333;left:805.8px;letter-spacing:-0.47px;">Schweißer</span>
<span class="t" style="top:1248.7px;font-size:22.7px;color:#333;left:1084.8px;letter-spacing:-0.48px;">Std.</span>
<span class="t" style="top:1248.7px;font-size:22.7px;color:#333;left:1341.5px;letter-spacing:-0.46px;">40,00</span>
<span class="t" style="top:1248.7px;font-size:22.7px;color:#333;left:1471.9px;letter-spacing:-0.36px;">40,50 €</span>
<span class="t" style="top:1248.7px;font-size:22.7px;color:#333;left:1592.1px;letter-spacing:-0.44px;">1.620,00 €</span>
<svg class="a" style="left:1727.4px;top:1249.2px" width="22" height="22" viewBox="0 0 22 22"><path d="M1.6 1.6 L20.4 20.4 M20.4 1.6 L1.6 20.4" stroke="#e8470f" stroke-width="3.9" fill="none"/></svg>
<svg class="a" style="left:1727.4px;top:1294.2px" width="22" height="22" viewBox="0 0 22 22"><path d="M1.6 1.6 L20.4 20.4 M20.4 1.6 L1.6 20.4" stroke="#e8470f" stroke-width="3.9" fill="none"/></svg>
<span class="t" style="top:1338.7px;font-size:22.7px;color:#333;left:83.8px;letter-spacing:-0.32px;">Reagan, Robert ( 5 )</span>
<span class="t" style="top:1338.7px;font-size:22.7px;color:#333;left:805.8px;letter-spacing:-0.30px;">Busfahrer</span>
<span class="t" style="top:1338.7px;font-size:22.7px;color:#333;left:1084.8px;letter-spacing:-0.48px;">Std.</span>
<span class="t" style="top:1338.7px;font-size:22.7px;color:#333;left:1341.5px;letter-spacing:-0.46px;">80,00</span>
<span class="t" style="top:1338.7px;font-size:22.7px;color:#333;left:1484.3px;letter-spacing:-0.38px;">0,00 €</span>
<span class="t" style="top:1338.7px;font-size:22.7px;color:#333;left:1634.3px;letter-spacing:-0.38px;">0,00 €</span>
<svg class="a" style="left:1727.4px;top:1339.2px" width="22" height="22" viewBox="0 0 22 22"><path d="M1.6 1.6 L20.4 20.4 M20.4 1.6 L1.6 20.4" stroke="#e8470f" stroke-width="3.9" fill="none"/></svg>
<svg class="a" style="left:1727.4px;top:1384.2px" width="22" height="22" viewBox="0 0 22 22"><path d="M1.6 1.6 L20.4 20.4 M20.4 1.6 L1.6 20.4" stroke="#e8470f" stroke-width="3.9" fill="none"/></svg>
<svg class="a" style="left:42px;top:805.5px" width="18" height="14" viewBox="0 0 18 14"><path d="M1 7 H15 M10 1.5 L15.5 7 L10 12.5" stroke="#4089c9" stroke-width="1.5" fill="none"/></svg>
<svg class="a" style="left:44px;top:1389px" width="16" height="16" viewBox="0 0 16 16"><path d="M8 0 L9.2 5.2 L13.7 2.3 L10.8 6.8 L16 8 L10.8 9.2 L13.7 13.7 L9.2 10.8 L8 16 L6.8 10.8 L2.3 13.7 L5.2 9.2 L0 8 L5.2 6.8 L2.3 2.3 L6.8 5.2 Z" fill="#8a8a8a"/></svg>
<div class="a " style="left:0px;top:1481px;width:2507px;height:69px;background:linear-gradient(180deg,#e4e4e4,#dedede);"></div>
<div class="a " style="left:2px;top:1482px;width:198px;height:66px;background:#cfe4f7;"></div>
<div class="a " style="left:2px;top:1483px;width:197px;height:65px;background:linear-gradient(90deg,#2a5e97,#245990);"></div>
<svg class="a" style="left:21px;top:1497px" width="37" height="37" viewBox="0 0 37 37"><circle cx="18.3" cy="18.4" r="17.4" fill="#fdd164"/><circle cx="18.3" cy="18.4" r="12.6" fill="#f8c25d"/><text x="18.3" y="25.6" font-family="Liberation Sans" font-size="20" font-weight="bold" fill="#fdd571" text-anchor="middle">$</text></svg>
<span class="t" style="top:1504.3px;font-size:25.6px;color:#fff;left:68.8px;transform:scaleX(0.9228);transform-origin:0 0;">Rechnung</span>
<svg class="a" style="left:14px;top:12px" width="28" height="28" viewBox="0 0 28 28"><circle cx="13.95" cy="13.4" r="12.85" fill="#f4f8fd"/><circle cx="13.95" cy="13.4" r="10.6" fill="#434b59"/><path d="M21.4 6.6 C18.4 3.6 11.8 3.6 8.8 6.4" stroke="#b4bac4" stroke-width="1.1" fill="none"/><path d="M6.6 20.2 C9.6 23.4 16.2 23.4 19.2 20.4" stroke="#b4bac4" stroke-width="1.1" fill="none"/><path d="M19.9 10.4 C19.2 7.2 15.6 6.2 12.8 6.9 C9.8 7.7 8.7 10.2 10.2 12 C12 14 16 14.4 17.4 16.6 C18.6 18.6 16.6 20.4 13.6 20.4 C10.8 20.4 8.6 19 7.9 16.6" stroke="#fff" stroke-width="2.7" fill="none" stroke-linecap="butt"/></svg>
<svg class="a" style="left:21px;top:68px" width="45" height="56" viewBox="0 0 45 56"><path d="M13 0 H44.7 V56 H0 V13 Z" fill="#f5f6f7"/><path d="M0 13 L13 0 V13 Z" fill="#a3daf3"/><rect x="18.5" y="8" width="20.6" height="3.8" fill="#d6dbe4"/><rect x="5.7" y="17.4" width="33.4" height="3.8" fill="#d6dbe4"/><rect x="5.7" y="27.1" width="33.4" height="3.8" fill="#d6dbe4"/><rect x="5.7" y="36.8" width="33.4" height="3.8" fill="#d6dbe4"/><rect x="5.7" y="46.4" width="33.4" height="3.8" fill="#d6dbe4"/></svg>
<svg class="a" style="left:117px;top:68px" width="56" height="56" viewBox="0 0 56 56"><path d="M2.5 0 H46.4 L56 9.3 V53.5 Q56 56 53.5 56 H2.5 Q0 56 0 53.5 V2.5 Q0 0 2.5 0 Z" fill="#5f7283"/><path d="M9.8 0 H46.2 V17.4 Q46.2 19.9 43.7 19.9 H12.3 Q9.8 19.9 9.8 17.4 Z" fill="#babfc8"/><rect x="33.1" y="4" width="9.8" height="12" fill="#5f7283"/><rect x="9.8" y="27.2" width="36.4" height="25.8" rx="2.2" fill="#f4f6f7"/><rect x="13" y="31.6" width="29.8" height="2.4" fill="#70d4be"/><rect x="13" y="38.7" width="29.8" height="2.4" fill="#70d4be"/><rect x="13" y="45.9" width="29.8" height="2.4" fill="#70d4be"/></svg>
<svg class="a" style="left:243px;top:68px" width="56" height="56" viewBox="0 0 56 56"><path d="M18.8 0.4 H44.5 Q47 0.4 47 2.9 V22 H8.8 V10.4 Z" fill="#f4f5f6"/><path d="M9.4 10.3 L18.8 0.7 V8.3 Q18.8 10.3 16.8 10.3 Z" fill="#d6dae3"/><rect x="6.8" y="15.7" width="2" height="6" fill="#4f6172"/><rect x="47" y="15.7" width="2" height="6" fill="#4f6172"/><rect x="0" y="20.9" width="55.8" height="29.9" rx="2.8" fill="#d4dbe5"/><rect x="3.6" y="23.7" width="48.6" height="8" rx="3.2" fill="#f4f5f6"/><circle cx="9.2" cy="27.6" r="1.8" fill="#f6c864"/><circle cx="15.3" cy="27.6" r="1.8" fill="#e8746b"/><path d="M6.8 39.7 H48.9 V50.8 H6.8 Z" fill="#4f6172"/><path d="M8.8 42 H47 V53.4 Q47 55.7 44.7 55.7 H11.1 Q8.8 55.7 8.8 53.4 Z" fill="#f4f5f6"/><rect x="13.9" y="44.9" width="27.9" height="1.9" fill="#7ebdab"/><rect x="13.9" y="50.6" width="19" height="1" fill="#a6d5e9"/></svg>
<svg class="a" style="left:394px;top:68px" width="56" height="56" viewBox="0 0 56 56"><path d="M18.8 0.4 H44.5 Q47 0.4 47 2.9 V22 H8.8 V10.4 Z" fill="#f4f5f6"/><path d="M9.4 10.3 L18.8 0.7 V8.3 Q18.8 10.3 16.8 10.3 Z" fill="#d6dae3"/><rect x="6.8" y="15.7" width="2" height="6" fill="#4f6172"/><rect x="47" y="15.7" width="2" height="6" fill="#4f6172"/><rect x="0" y="20.9" width="55.8" height="29.9" rx="2.8" fill="#d4dbe5"/><rect x="3.6" y="23.7" width="48.6" height="8" rx="3.2" fill="#f4f5f6"/><circle cx="9.2" cy="27.6" r="1.8" fill="#f6c864"/><circle cx="15.3" cy="27.6" r="1.8" fill="#e8746b"/><path d="M6.8 39.7 H48.9 V50.8 H6.8 Z" fill="#4f6172"/><path d="M8.8 42 H47 V53.4 Q47 55.7 44.7 55.7 H11.1 Q8.8 55.7 8.8 53.4 Z" fill="#f4f5f6"/><rect x="13.9" y="44.9" width="27.9" height="1.9" fill="#7ebdab"/><rect x="13.9" y="50.6" width="19" height="1" fill="#a6d5e9"/></svg>
<svg class="a" style="left:526px;top:68px" width="56" height="56" viewBox="0 0 56 56"><path d="M28 0 L56 19.5 V30 H0 V19.5 Z" fill="#f07b67"/><rect x="3.2" y="5.4" width="49.2" height="40" rx="1.8" fill="#f3f4f6"/><rect x="8.8" y="10.3" width="38.3" height="2.8" fill="#d4dae3"/><rect x="8.8" y="19.4" width="38.3" height="2.8" fill="#d4dae3"/><rect x="17.8" y="28.2" width="20.5" height="2.8" fill="#d4dae3"/><path d="M0 18.8 L23.3 37.2 H32.7 L56 18.8 V54 Q56 56 54 56 H2 Q0 56 0 54 Z" fill="#fdd367"/><path d="M0.9 56 L23.7 37.5 H32.3 L55.1 56 Z" fill="#f6bb5d"/></svg>
<svg class="a" style="left:624px;top:74px" width="46" height="44" viewBox="0 0 46 44"><rect x="1" y="3.3" width="11" height="37.5" rx="1.4" fill="#1e9bff"/><path d="M16.2 22 L42.3 4.3 V39.7 Z" fill="#1e9bff" stroke="#1e9bff" stroke-width="1.6" stroke-linejoin="round"/></svg>
<svg class="a" style="left:730px;top:72px" width="38" height="48" viewBox="0 0 38 48"><path d="M3 24 L33.3 3.8 V44 Z" fill="#1e9bff" stroke="#1e9bff" stroke-width="1.8" stroke-linejoin="round"/></svg>
<svg class="a" style="left:845px;top:72px" width="38" height="48" viewBox="0 0 38 48"><path d="M33.3 24 L3 3.8 V44 Z" fill="#1e9bff" stroke="#1e9bff" stroke-width="1.8" stroke-linejoin="round"/></svg>
<svg class="a" style="left:936px;top:74px" width="46" height="44" viewBox="0 0 46 44"><rect x="33" y="3.4" width="11" height="37.3" rx="1.4" fill="#1e9bff"/><path d="M29.4 22 L2.8 4.2 V39.8 Z" fill="#1e9bff" stroke="#1e9bff" stroke-width="1.6" stroke-linejoin="round"/></svg>
<svg class="a" style="left:1060px;top:66px" width="64" height="64" viewBox="0 0 64 64"><g transform="translate(2 2)"><rect x="-5.8" y="-10" width="11.6" height="20" rx="5.5" fill="#cfd8e5" transform="translate(46.6 46.4) rotate(-45)"/><rect x="-3.4" y="-2.5" width="6.8" height="4.4" fill="#4a637a" transform="translate(40.4 40.2) rotate(-45)"/><circle cx="23.3" cy="23.1" r="20.4" fill="#f2f3f5" stroke="#4a637a" stroke-width="6"/><circle cx="23.3" cy="23.5" r="12.8" fill="#fdca5b"/><circle cx="23.3" cy="23.5" r="10.9" fill="#f9bb4d"/><text x="23.3" y="29.6" font-family="Liberation Sans" font-size="17" font-weight="bold" fill="#fdcf66" text-anchor="middle">$</text></g></svg>
<svg class="a" style="left:1220px;top:66px" width="56" height="60" viewBox="0 0 56 60"><g transform="translate(-1220 -66)"><path d="M1241.6 68.7 L1261.3 84 V121.9 Q1261.3 123.9 1259.3 123.9 H1223.9 Q1221.9 123.9 1221.9 121.9 V84 Z" fill="#f3f4f5" stroke="#f3f4f5" stroke-width="1.5" stroke-linejoin="round"/><rect x="1228" y="91" width="27" height="2.7" fill="#d4dae5"/><rect x="1228" y="97.8" width="27" height="2.3" fill="#d4dae5"/><rect x="1228" y="104.8" width="27" height="2.3" fill="#d4dae5"/><rect x="1228" y="110.9" width="27" height="3" fill="#d4dae5"/><ellipse cx="1253.9" cy="87.9" rx="11.4" ry="17.9" fill="none" stroke="#3f566b" stroke-width="2.2" stroke-dasharray="66 4 40" transform="rotate(-40 1253.9 87.9)"/></g></svg>
<svg class="a" style="left:1340px;top:64px" width="66" height="64" viewBox="0 0 66 64"><g transform="translate(-1340 -64)"><path d="M1371.2 97.5 L1371.2 71.2 A26.3 26.3 0 1 0 1389.8 116.1 Z" fill="#4a6275"/><path d="M1374.6 94.1 V67.8 A26.3 26.3 0 0 1 1400.9 94.1 Z" fill="#f27864"/><path d="M1376.9 98 H1398.2 A21.4 21.4 0 0 1 1392 113.1 Z" fill="#6ecabb"/><text x="1383.6" y="90.4" font-family="Liberation Sans" font-size="21.5" font-weight="bold" fill="#fdd367" text-anchor="middle">$</text></g></svg>
<svg class="a" style="left:1526px;top:66px" width="64" height="60" viewBox="0 0 64 60"><g transform="translate(-1526 -66)"><circle cx="1564.7" cy="83.2" r="13.5" fill="#fdd060"/><circle cx="1564.7" cy="83.2" r="11.5" fill="#f9bc4d"/><text x="1564.7" y="89.6" font-family="Liberation Sans" font-size="18" font-weight="bold" fill="#fdd060" text-anchor="middle">$</text><path d="M1537.6 103.6 C1541.5 99.6 1546.5 98 1552 98.6 C1557 99.1 1561 101.3 1566 102 C1570 102.5 1573.5 104 1573 106.2 C1576.5 104.5 1580 101.5 1583 99.8 C1584.6 99 1585.8 100.4 1584.8 101.8 C1581 106.5 1575 111 1568 113 C1561 115 1553 114.2 1547 116.8 L1545.2 117.6 Z" fill="#fdcf5c"/><path d="M1556 108.3 C1561 109.4 1567 109 1572 107.4" stroke="#fde39a" stroke-width="1.1" fill="none"/><ellipse cx="1569.2" cy="105" rx="2.2" ry="1.6" fill="#fdf0cc"/><path d="M1529.2 106.4 L1535.5 102.6 L1545.8 117.8 L1539.8 121.8 Z" fill="#3f566b"/><circle cx="1541.4" cy="117.2" r="1.3" fill="#e8746b"/></g></svg>
</body></html>
